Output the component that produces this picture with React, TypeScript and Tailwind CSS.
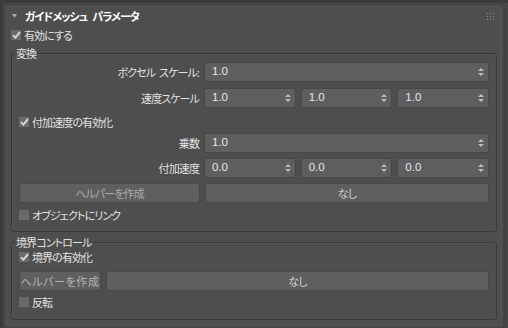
import React from "react";

// ─── Small pieces ────────────────────────────────────────────────────────────
const JP = "font-['Noto_Sans_CJK_JP',sans-serif] [font-feature-settings:'palt'] tracking-[-0.9px] whitespace-nowrap";

function Sp({ w = "w-[5px]" }: { w?: string }) {
  return <span className={`inline-block ${w}`} />;
}

function Spinner() {
  return (
    <div className="flex flex-col items-center gap-[2px]">
      <svg width="6" height="3" viewBox="0 0 6 3"><path d="M0 3 L3 0 L6 3 Z" fill="#bdbdbd" /></svg>
      <svg width="6" height="3" viewBox="0 0 6 3"><path d="M0 0 L6 0 L3 3 Z" fill="#bdbdbd" /></svg>
    </div>
  );
}

function NumField({ value }: { value: string }) {
  return (
    <div className="h-[20px] flex items-center justify-between bg-[#5e5e5e] border border-[#474747] rounded-[2px] pl-[7px] pr-[4px]">
      <span className="font-['Liberation_Sans',sans-serif] text-[11.5px] text-[#e4e8f0] leading-none">{value}</span>
      <Spinner />
    </div>
  );
}

function Check({ label, checked }: { label: string; checked?: boolean }) {
  return (
    <div className="h-[20px] flex items-center gap-[3px]">
      <div className="w-[10px] h-[10px] bg-[#6a6a6a] flex items-center justify-center">
        {checked && (
          <svg width="9" height="8" viewBox="0 0 9 8">
            <path d="M1 4.2 L3.4 6.6 L8 1" stroke="#d4d4d4" strokeWidth="2" fill="none" />
          </svg>
        )}
      </div>
      <span className={`${JP} text-[11px] text-[#e2e2e2] leading-none`}>{label}</span>
    </div>
  );
}

function Btn({ label, className = "", textClass = "" }: { label: string; className?: string; textClass?: string }) {
  return (
    <div className={`h-[20px] flex items-center justify-center bg-[#5f5f5f] border border-[#484848] rounded-[3px] overflow-hidden ${className}`}>
      <span className={`${JP} text-[11px] leading-none ${textClass}`}>{label}</span>
    </div>
  );
}

function Row({ label, children, className = "" }: { label: React.ReactNode; children: React.ReactNode; className?: string }) {
  return (
    <div className={`flex items-center gap-[5px] ${className}`}>
      <div className={`${JP} w-[180px] text-right text-[11px] text-[#e2e2e2] leading-none`}>{label}</div>
      <div className="flex-1">{children}</div>
    </div>
  );
}

function Group({ title, children, className = "" }: { title: string; children: React.ReactNode; className?: string }) {
  return (
    <div className={`relative border border-[#393939] rounded-[3px] shadow-[inset_1px_1px_0_#555555] px-[7px] ${className}`}>
      <span className={`${JP} absolute left-[3px] top-[-8px] px-[1px] bg-[#4e4e4e] text-[11px] text-[#e2e2e2] leading-[14px]`}>
        {title}
      </span>
      {children}
    </div>
  );
}

// ─── Panel ───────────────────────────────────────────────────────────────────
export default function App() {
  return (
    <div className="w-[508px] h-[328px] overflow-hidden bg-[#474747] border-t-[3px] border-l-[3px] border-[#3b3b3b] flex">
      <div className="pt-[3px] pl-[3px]">
        <div className="w-[496px] h-[320px] bg-[#4e4e4e] border border-[#585858] rounded-t-[3px] px-[4px] flex flex-col">

          {/* ── Header ── */}
          <div className="h-[18px] flex items-center pl-[1px] pr-[2px]">
            <svg width="5" height="4" viewBox="0 0 5 4"><path d="M0 0 L5 0 L2.5 4 Z" fill="#a8a8a8" /></svg>
            <span className={`${JP} ml-[8px] text-[11px] font-bold text-white leading-none flex-1`}>
              ガイドメッシュ<Sp />パラメータ
            </span>
            <svg width="7" height="7" viewBox="0 0 7 7" className="mr-[1px]">
              {[0, 3, 6].map((y) => [0, 3, 6].map((x) => <rect key={`${x}-${y}`} x={x} y={y} width="1" height="1" fill="#8c8c8c" />))}
            </svg>
          </div>

          <Check label="有効にする" checked />

          {/* ── 変換 ── */}
          <Group title="変換" className="mt-[8px] pt-[8px] pb-[6px]">
            <Row label={<>ボクセル<Sp w="w-[4px]" />スケール:</>}>
              <NumField value="1.0" />
            </Row>
            <Row label="速度スケール" className="mt-[6px]">
              <div className="grid grid-cols-3 gap-[5px]">
                <NumField value="1.0" />
                <NumField value="1.0" />
                <NumField value="1.0" />
              </div>
            </Row>
            <div className="mt-[4px]"><Check label="付加速度の有効化" checked /></div>
            <Row label="乗数" className="mt-[1px]">
              <NumField value="1.0" />
            </Row>
            <Row label="付加速度" className="mt-[5px]">
              <div className="grid grid-cols-3 gap-[5px]">
                <NumField value="0.0" />
                <NumField value="0.0" />
                <NumField value="0.0" />
              </div>
            </Row>
            <div className="mt-[5px] flex gap-[5px]">
              <Btn label="ヘルパーを作成" className="w-[181px]" textClass="text-[#ababab]" />
              <Btn label="なし" className="flex-1" textClass="text-[#d0d0d0]" />
            </div>
            <div className="mt-[2px]"><Check label="オブジェクトにリンク" /></div>
          </Group>

          {/* ── 境界コントロール ── */}
          <Group title="境界コントロール" className="mt-[10px] pt-[4px] pb-[7px]">
            <Check label="境界の有効化" checked />
            <div className="mt-[4px] flex gap-[5px]">
              <Btn label="ヘルパーを作成" className="w-[82px]" textClass="text-[#b4b4b4] !tracking-[0.6px]" />
              <Btn label="なし" className="flex-1" textClass="text-[#d0d0d0]" />
            </div>
            <div className="mt-[1px]"><Check label="反転" /></div>
          </Group>
        </div>
      </div>

      {/* ── Right edge strip ── */}
      <div className="flex-1 flex pl-[3px] pt-[3px]">
        <div className="w-[1px] h-[320px] bg-[#3c3c3c]" />
      </div>
    </div>
  );
}
